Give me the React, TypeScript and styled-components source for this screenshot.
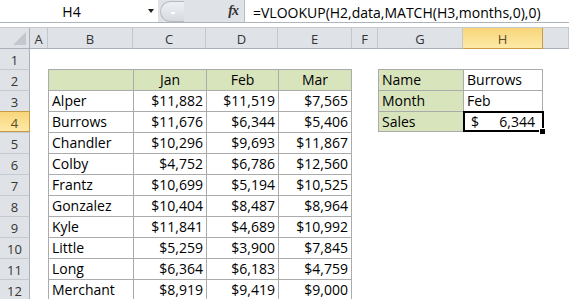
import styled, { createGlobalStyle } from 'styled-components';

const GlobalStyle = createGlobalStyle`
  html, body {
    margin: 0;
    padding: 0;
    background: #fff;
  }
  body {
    font-family: 'Open Sans', 'Liberation Sans', sans-serif;
    color: #000;
    overflow: hidden;
  }
`;

const BORDER = '#ababab';
const HEADER_BG = '#dfe3e8';
const GREEN = '#d8e4bc';

const Window = styled.div`
  width: 569px;
  height: 299px;
  overflow: hidden;
`;

const FormulaBar = styled.div`
  display: flex;
  height: 22px;
  border-bottom: 1px solid #aeb4bc;
  background: #dfe3e8;
  font-size: 14px;
  line-height: 22px;
`;

const NameBox = styled.div`
  width: 158px;
  display: flex;
  align-items: center;
  background: #fff;
`;

const NameText = styled.span`
  flex: 1;
  text-align: center;
  padding-top: 2px;
`;

const DropArrow = styled.span`
  width: 15px;
  display: flex;
  justify-content: center;

  &::after {
    content: '';
    border-left: 3.5px solid transparent;
    border-right: 3.5px solid transparent;
    border-top: 4px solid #222;
  }
`;

const BarTools = styled.div`
  width: 86px;
  display: flex;
  align-items: center;
`;

const Grip = styled.span`
  width: 24px;
  height: 21px;
  margin-left: 2px;
  box-sizing: border-box;
  border: 1px solid #b7bcc4;
  border-right: none;
  border-radius: 11px 0 0 11px;
  background: linear-gradient(#eef0f3, #d6dae0);
  display: flex;
  align-items: center;
  justify-content: center;

  &::after {
    content: '';
    width: 4px;
    height: 2px;
    margin-top: 4px;
    background: #fff;
  }
`;

const Fx = styled.span`
  margin-left: auto;
  padding-right: 6px;
  font-family: 'Liberation Serif', serif;
  font-style: italic;
  font-weight: bold;
  font-size: 14px;
  color: #333;
  letter-spacing: -1px;
`;

const FormulaInput = styled.div`
  flex: 1;
  background: #fff;
  border-left: 1px solid #b9bec6;
  padding: 2px 0 0 8px;
  white-space: nowrap;
`;

const Band = styled.div`
  height: 4px;
  background: #fff;
  border-bottom: 1px solid #c3c8cf;
`;

const Grid = styled.div`
  display: grid;
  grid-template-columns: 30px 18px 85px 73px 72px 74px 26px 85px 80px 26px;
  grid-template-rows: 21px 20px repeat(11, 21px);
`;

const Corner = styled.div`
  background: ${HEADER_BG};
  border-right: 1px solid #a9b0b9;
  border-bottom: 1px solid #a9b0b9;
  display: flex;
  align-items: flex-end;
  justify-content: flex-end;
  padding: 0 3px 3px 0;
`;

const CornerMark = styled.span`
  width: 0;
  height: 0;
  border-left: 13px solid transparent;
  border-bottom: 13px solid #c4c8ce;
`;

const ColHeader = styled.div<{ $active?: boolean }>`
  box-sizing: border-box;
  background: ${(p) => (p.$active ? 'linear-gradient(#f9d57a, #fde9a6)' : HEADER_BG)};
  border-right: 1px solid ${(p) => (p.$active ? '#c99b45' : '#c3c8cf')};
  border-bottom: 1px solid ${(p) => (p.$active ? '#c99b45' : '#a9b0b9')};
  color: ${(p) => (p.$active ? '#5c4a2a' : '#333')};
  font-size: 13px;
  line-height: 20px;
  padding-top: 1px;
  text-align: center;
`;

const RowHeader = styled.div<{ $active?: boolean; $first?: boolean }>`
  box-sizing: border-box;
  background: ${(p) => (p.$active ? 'linear-gradient(#f9d57a, #fde9a6)' : HEADER_BG)};
  border-right: 1px solid ${(p) => (p.$active ? '#c99b45' : '#a9b0b9')};
  border-top: ${(p) => (p.$first ? 'none' : `1px solid ${p.$active ? '#c99b45' : '#c5cad1'}`)};
  border-bottom: ${(p) => (p.$active ? '1px solid #c99b45' : 'none')};
  color: ${(p) => (p.$active ? '#5c4a2a' : '#333')};
  font-size: 13px;
  line-height: 20px;
  padding-top: 1px;
  text-align: center;
`;

type Align = 'left' | 'right' | 'center';

const Cell = styled.div<{
  $fill?: boolean;
  $align?: Align;
  $top?: boolean;
  $left?: boolean;
  $right?: boolean;
  $bottom?: boolean;
}>`
  position: relative;
  box-sizing: border-box;
  padding: 0 3px 0 3px;
  font-size: 14px;
  line-height: 20px;
  white-space: nowrap;
  text-align: ${(p) => p.$align ?? 'left'};
  background: ${(p) => (p.$fill ? GREEN : 'transparent')};
  border-top: ${(p) => (p.$top ? `1px solid ${BORDER}` : 'none')};
  border-left: ${(p) => (p.$left ? `1px solid ${BORDER}` : 'none')};
  border-right: ${(p) => (p.$right ? `1px solid ${BORDER}` : 'none')};
  border-bottom: ${(p) => (p.$bottom ? `1px solid ${BORDER}` : 'none')};
`;

const SelectedCell = styled(Cell)`
  display: flex;
  justify-content: space-between;
  padding: 0 7px 0 7px;

  &::after {
    content: '';
    position: absolute;
    left: -1px;
    top: -1px;
    right: -2px;
    bottom: -1px;
    border: 2px solid #000;
  }

  &::before {
    content: '';
    position: absolute;
    right: -4px;
    bottom: -4px;
    width: 5px;
    height: 5px;
    background: #000;
    border: 1px solid #fff;
    z-index: 1;
  }
`;

const COLS = ['A', 'B', 'C', 'D', 'E', 'F', 'G', 'H', ''];
const MONTHS = ['Jan', 'Feb', 'Mar'];

const sales: [string, number, number, number][] = [
  ['Alper', 11882, 11519, 7565],
  ['Burrows', 11676, 6344, 5406],
  ['Chandler', 10296, 9693, 11867],
  ['Colby', 4752, 6786, 12560],
  ['Frantz', 10699, 5194, 10525],
  ['Gonzalez', 10404, 8487, 8964],
  ['Kyle', 11841, 4689, 10992],
  ['Little', 5259, 3900, 7845],
  ['Long', 6364, 6183, 4759],
  ['Merchant', 8919, 9419, 9000],
];

const lookup: [string, string][] = [
  ['Name', 'Burrows'],
  ['Month', 'Feb'],
  ['Sales', ''],
];

const money = (n: number) => '$' + n.toLocaleString('en-US');

const renderCell = (row: number, col: number) => {
  const key = `${row}-${col}`;

  // data table B2:E12
  if (row >= 2 && col >= 1 && col <= 4) {
    const edge = { $top: true, $left: true, $right: col === 4 };
    if (row === 2) {
      return (
        <Cell key={key} {...edge} $fill $align="center">
          {col > 1 ? MONTHS[col - 2] : ''}
        </Cell>
      );
    }
    const rec = sales[row - 3];
    if (col === 1) {
      return (
        <Cell key={key} {...edge}>
          {rec[0]}
        </Cell>
      );
    }
    return (
      <Cell key={key} {...edge} $align="right">
        {money(rec[col - 1] as number)}
      </Cell>
    );
  }

  // lookup G2:H4
  if (row >= 2 && row <= 4 && (col === 6 || col === 7)) {
    const [label, value] = lookup[row - 2];
    if (col === 6) {
      return (
        <Cell key={key} $top $left $bottom={row === 4} $fill>
          {label}
        </Cell>
      );
    }
    if (row === 4) {
      return (
        <SelectedCell key={key} $top $left $right $bottom>
          <span>$</span>
          <span>6,344</span>
        </SelectedCell>
      );
    }
    return (
      <Cell key={key} $top $left $right>
        {value}
      </Cell>
    );
  }

  return <Cell key={key} />;
};

export default function App() {
  const rows = Array.from({ length: 12 }, (_, i) => i + 1);

  return (
    <>
      <GlobalStyle />
      <Window>
        <FormulaBar>
          <NameBox>
            <NameText>H4</NameText>
            <DropArrow />
          </NameBox>
          <BarTools>
            <Grip />
            <Fx>fx</Fx>
          </BarTools>
          <FormulaInput>=VLOOKUP(H2,data,MATCH(H3,months,0),0)</FormulaInput>
        </FormulaBar>
        <Band />
        <Grid>
          <Corner>
            <CornerMark />
          </Corner>
          {COLS.map((c, i) => (
            <ColHeader key={i} $active={c === 'H'}>
              {c}
            </ColHeader>
          ))}
          {rows.map((r) => [
            <RowHeader key={`h${r}`} $first={r === 1} $active={r === 4}>
              {r}
            </RowHeader>,
            ...COLS.map((_, ci) => renderCell(r, ci)),
          ])}
        </Grid>
      </Window>
    </>
  );
}
